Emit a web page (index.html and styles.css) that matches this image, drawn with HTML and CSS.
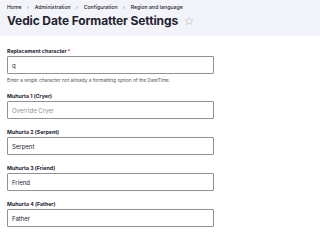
FILE: index.html
```html
<!DOCTYPE html>
<html lang="en">
<head>
<meta charset="utf-8">
<title>Vedic Date Formatter Settings</title>
<link rel="stylesheet" href="styles.css">
</head>
<body>
<header class="page-header">
  <nav class="breadcrumb">
    <a href="#">Home</a><span class="sep"><svg viewBox="0 0 4 6" width="2" height="3"><path d="M0.8 0.6 L3.2 3 L0.8 5.4" fill="none" stroke="#545560" stroke-width="1"/></svg></span><a href="#">Administration</a><span class="sep"><svg viewBox="0 0 4 6" width="2" height="3"><path d="M0.8 0.6 L3.2 3 L0.8 5.4" fill="none" stroke="#545560" stroke-width="1"/></svg></span><a href="#">Configuration</a><span class="sep"><svg viewBox="0 0 4 6" width="2" height="3"><path d="M0.8 0.6 L3.2 3 L0.8 5.4" fill="none" stroke="#545560" stroke-width="1"/></svg></span><a href="#">Region and language</a>
  </nav>
  <div class="title-row">
    <h1 class="title">Vedic Date Formatter Settings</h1>
    <svg class="star" viewBox="0 0 24 24" width="10" height="10"><path d="M12 2.6 L14.8 8.6 L21.3 9.3 L16.4 13.7 L17.8 20.2 L12 16.9 L6.2 20.2 L7.6 13.7 L2.7 9.3 L9.2 8.6 Z" fill="none" stroke="#c0c2c9" stroke-width="1.6" stroke-linejoin="round"/></svg>
  </div>
</header>
<main class="content">
  <form class="form">
    <div class="form-item">
      <label class="label">Replacement character<span class="req">*</span></label>
      <input class="input" type="text" value="q">
      <div class="desc">Enter a single character not already a formatting option of the DateTime.</div>
    </div>
    <div class="form-item">
      <label class="label">Muhurta 1 (Cryer)</label>
      <input class="input" type="text" placeholder="Override Cryer">
    </div>
    <div class="form-item">
      <label class="label">Muhurta 2 (Serpent)</label>
      <input class="input" type="text" value="Serpent">
    </div>
    <div class="form-item">
      <label class="label">Muhurta 3 (Friend)</label>
      <input class="input" type="text" value="Friend">
    </div>
    <div class="form-item">
      <label class="label">Muhurta 4 (Father)</label>
      <input class="input" type="text" value="Father">
    </div>
  </form>
</main>
</body>
</html>
```
FILE: styles.css
```css
html, body {
  margin: 0;
  padding: 0;
  background: #ffffff;
  font-family: Inter, "Liberation Sans", sans-serif;
  color: #222330;
}
.page-header {
  background: #f3f4f9;
  padding: 4px 7px 8px;
}
.breadcrumb {
  display: flex;
  align-items: center;
  font-size: 5.2px;
  line-height: 6px;
  font-weight: 500;
}
.breadcrumb a {
  color: #222330;
  text-decoration: none;
}
.sep {
  display: inline-flex;
  align-items: center;
  margin: 0 5.5px;
}
.title-row {
  display: flex;
  align-items: center;
  margin-top: 3px;
}
.title {
  margin: 0;
  font-size: 12px;
  line-height: 15px;
  font-weight: 700;
  letter-spacing: -0.01em;
}
.star {
  margin-left: 6px;
}
.content {
  padding: 11px 7px 0 7px;
}
.form {
  margin: 0;
  max-width: 207px;
}
.form-item {
  display: flex;
  flex-direction: column;
  margin-bottom: 9px;
}
.label {
  font-size: 5.25px;
  line-height: 7px;
  font-weight: 700;
  margin: 1px 0;
}
.req {
  color: #dc2323;
  margin-left: 1px;
}
.input {
  box-sizing: border-box;
  height: 18px;
  margin: 0;
  width: 100%;
  border: 1px solid #919297;
  border-radius: 1px;
  padding: 0 4px;
  background: #fff;
  font-family: Inter, "Liberation Sans", sans-serif;
  font-size: 6px;
  color: #222330;
  outline: none;
}
.input::placeholder {
  color: #8e929c;
  opacity: 1;
}
.desc {
  font-size: 4.8px;
  line-height: 6px;
  color: #545560;
  margin-top: 3px;
}
```
